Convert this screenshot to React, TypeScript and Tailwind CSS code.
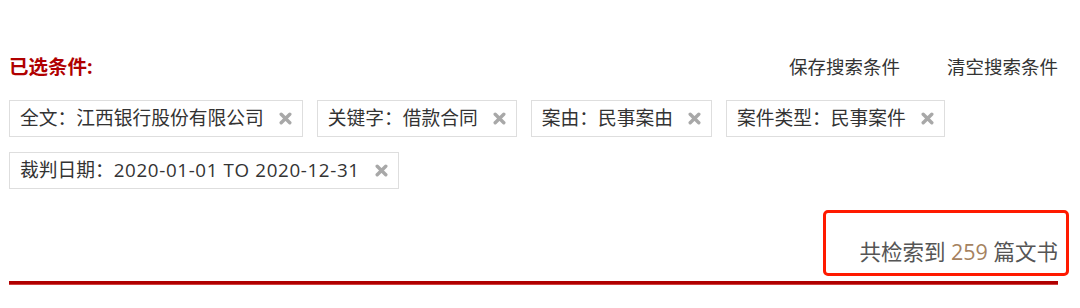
const font = { fontFamily: '"Open Sans", "Noto Sans CJK SC", sans-serif' };

const tags = [
  { label: "全文：", value: "江西银行股份有限公司" },
  { label: "关键字：", value: "借款合同" },
  { label: "案由：", value: "民事案由" },
  { label: "案件类型：", value: "民事案件" },
  { label: "裁判日期：", value: "2020-01-01 TO 2020-12-31", latin: true },
];

function CloseIcon() {
  return (
    <svg width="13" height="13" viewBox="0 0 13 13" className="shrink-0">
      <path d="M2.2 2.2 L10.8 10.8 M10.8 2.2 L2.2 10.8" stroke="#a8a8a8" strokeWidth="3.4" strokeLinecap="round" />
    </svg>
  );
}

export default function App() {
  return (
    <div className="w-[1080px] h-[308px] bg-white pl-[9px] pr-[22px] pt-[53px] text-[#333]" style={font}>
      {/* header */}
      <div className="flex items-center justify-between h-[28px]">
        <div className="text-[19.5px] font-bold text-[#b00000]">已选条件:</div>
        <div className="flex items-center gap-[47px] text-[18.5px] text-[#333]">
          <span>保存搜索条件</span>
          <span>清空搜索条件</span>
        </div>
      </div>

      {/* selected tags */}
      <div className="mt-[19px] flex flex-wrap gap-x-[14px] gap-y-[15px] w-[960px]">
        {tags.map((t) => (
          <div
            key={t.label}
            className="h-[37px] flex items-center gap-[15px] border border-[#dedede] bg-white pl-[10px] pr-[10px] text-[18.75px] text-[#333]"
          >
            <span className="leading-none whitespace-nowrap">
              {t.label}
              <span className={t.latin ? "tracking-[0.65px]" : ""}>{t.value}</span>
            </span>
            <CloseIcon />
          </div>
        ))}
      </div>

      {/* result count */}
      <div className="mt-[21px] flex justify-end">
        <div className="-mr-[11px] w-[246px] h-[66px] border-[3px] border-[#ff1a00] rounded-[5px] flex items-end justify-end pr-[8px] pb-[7px]">
          <span className="text-[21.5px] text-[#555] leading-[28px] whitespace-nowrap">
            共检索到 <span className="text-[#a5825f]">259</span> 篇文书
          </span>
        </div>
      </div>

      <div className="mt-[5px] h-[4px] bg-[#b00000] border-b border-[#d04040]" />
    </div>
  );
}
